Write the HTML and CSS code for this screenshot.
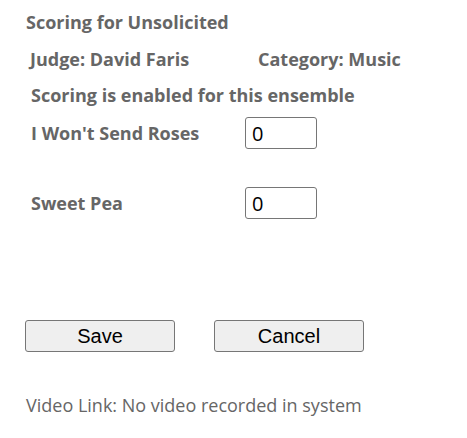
FILE: index.html
```html
<!DOCTYPE html>
<html>
<head>
<meta charset="utf-8">
<link rel="stylesheet" href="styles.css">
</head>
<body>
<div class="page">
  <div class="title">Scoring for Unsolicited</div>
  <div class="meta">
    <span class="judge">Judge: David Faris</span>
    <span class="cat">Category: Music</span>
  </div>
  <div class="enabled">Scoring is enabled for this ensemble</div>
  <div class="song">
    <span class="label">I Won't Send Roses</span>
    <input class="score" type="text" value="0">
  </div>
  <div class="song second">
    <span class="label">Sweet Pea</span>
    <input class="score" type="text" value="0">
  </div>
  <div class="actions">
    <button class="btn">Save</button>
    <button class="btn">Cancel</button>
  </div>
  <div class="video">Video Link: No video recorded in system</div>
</div>
</body>
</html>
```
FILE: styles.css
```css
html, body {
  margin: 0;
  padding: 0;
  background: #fff;
}
.page {
  font-family: "Open Sans", "Noto Sans", sans-serif;
  color: #666;
  padding: 11px 0 0 26px;
}
.title {
  font-weight: bold;
  font-size: 18px;
  line-height: 22px;
}
.meta {
  display: flex;
  font-weight: bold;
  font-size: 18px;
  line-height: 22px;
  margin-top: 15px;
  padding-left: 4px;
}
.judge {
  width: 228px;
}
.enabled {
  font-weight: bold;
  font-size: 18px;
  line-height: 22px;
  margin-top: 14px;
  padding-left: 5px;
}
.song {
  display: flex;
  align-items: center;
  margin-top: 11px;
  padding-left: 5px;
}
.song.second {
  margin-top: 38px;
}
.label {
  width: 214px;
  font-weight: bold;
  font-size: 18px;
}
.score {
  box-sizing: border-box;
  width: 72px;
  height: 32px;
  border: 1px solid #767676;
  border-radius: 3px;
  padding: 0 6px;
  font-family: "Open Sans", sans-serif;
  font-size: 20px;
  color: #000;
  margin: 0;
}
.actions {
  display: flex;
  gap: 39px;
  margin-top: 101px;
  margin-left: -1px;
}
.btn {
  box-sizing: border-box;
  width: 150px;
  height: 32px;
  border: 1px solid #767676;
  border-radius: 3px;
  background: #efefef;
  font-family: "Liberation Sans", Arial, sans-serif;
  font-size: 20px;
  color: #000;
  padding: 0;
  margin: 0;
}
.video {
  font-size: 18px;
  line-height: 22px;
  margin-top: 42px;
}
```
